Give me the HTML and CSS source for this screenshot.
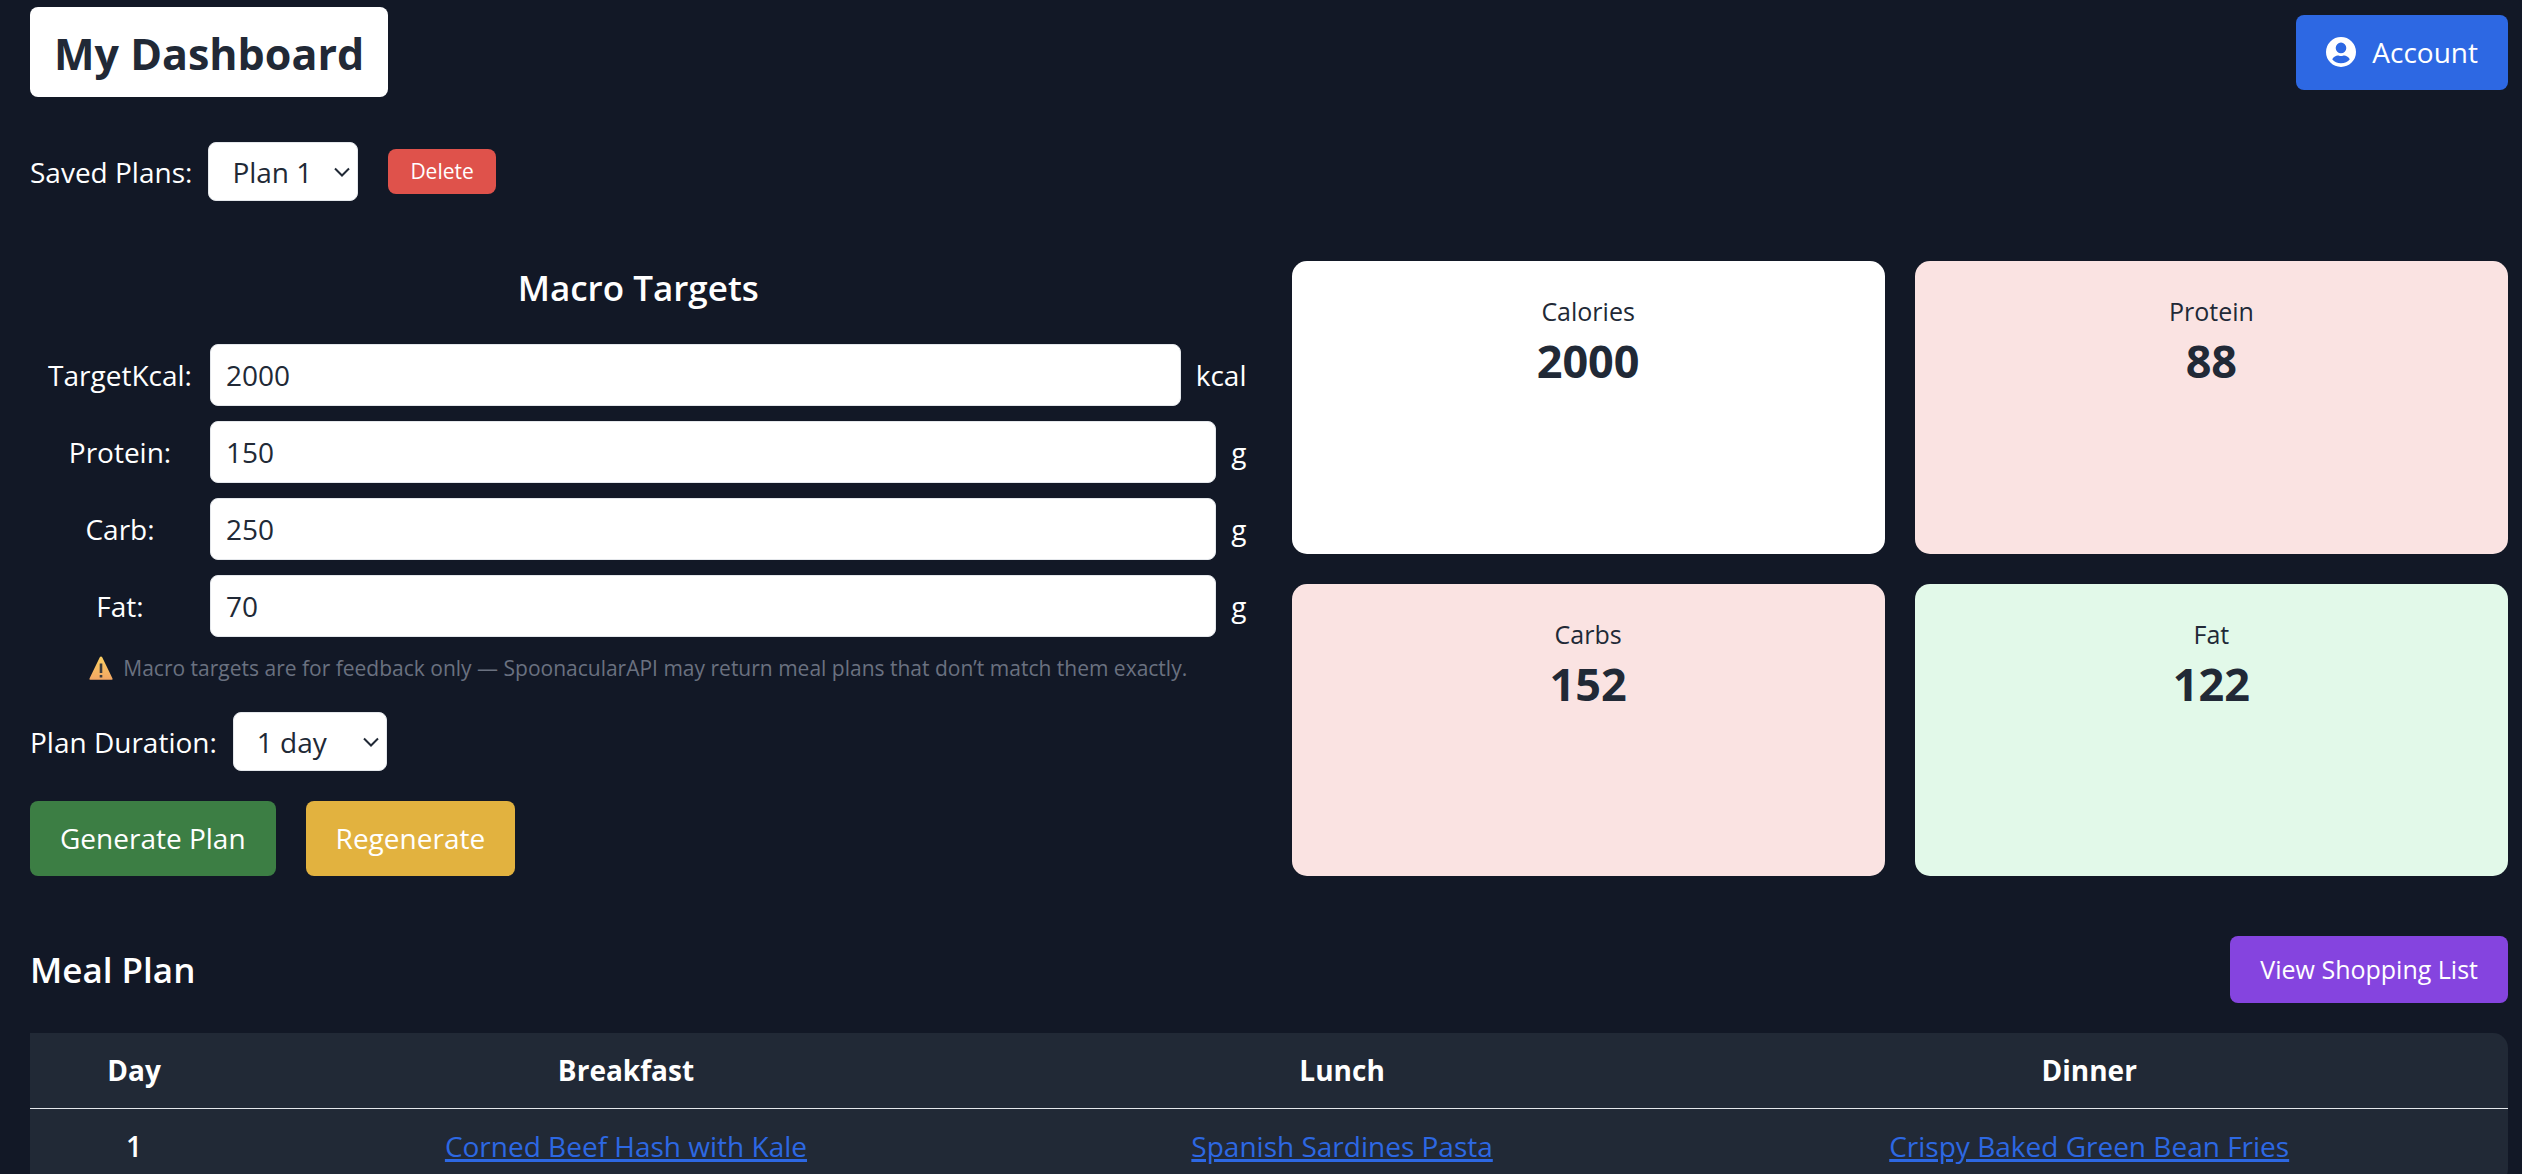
FILE: index.html
```html
<!DOCTYPE html>
<html lang="en">
<head>
  <meta charset="utf-8">
  <title>My Dashboard</title>
  <meta name="viewport" content="width=device-width, initial-scale=1">
  <link rel="stylesheet" href="styles.css">
</head>
<body>
  <main class="page">
    <header class="topbar">
      <h1 class="title">My Dashboard</h1>
      <button class="btn btn-account" type="button">
        <svg class="account-icon" viewBox="0 0 30 30" aria-hidden="true">
          <path fill="#fff" fill-rule="evenodd" d="M15 0a15 15 0 1 1 0 30a15 15 0 0 1 0-30zM15 5.600a5.300 5.300 0 1 0 0 10.600a5.300 5.300 0 0 0 0-10.600zM6.200 22.300C8.200 24.900 11.300 26.300 15 26.300s6.800-1.400 8.800-4c-1.500-2.600-3.800-3.800-5.600-3.800c-.8 0-1.700.6-3.200.6s-2.400-.6-3.200-.6c-1.800 0-4.100 1.200-5.600 3.800z"/>
        </svg>
        Account
      </button>
    </header>

    <div class="saved">
      <label for="saved-plan">Saved Plans:</label>
      <span class="select-wrap">
        <select class="select" id="saved-plan"><option>Plan 1</option><option>Plan 2</option></select>
        <svg class="chevron" viewBox="0 0 16 10" aria-hidden="true"><path d="M1 1.500l7 7l7-7"/></svg>
      </span>
      <button class="btn btn-delete" type="button">Delete</button>
    </div>

    <div class="columns">
      <form class="targets">
        <h2 class="heading heading-center">Macro Targets</h2>
        <div class="fields">
          <div class="field"><label class="field-label" for="kcal">TargetKcal:</label><input class="input" id="kcal" type="text" value="2000"><span>kcal</span></div>
          <div class="field"><label class="field-label" for="protein">Protein:</label><input class="input" id="protein" type="text" value="150"><span>g</span></div>
          <div class="field"><label class="field-label" for="carb">Carb:</label><input class="input" id="carb" type="text" value="250"><span>g</span></div>
          <div class="field"><label class="field-label" for="fat">Fat:</label><input class="input" id="fat" type="text" value="70"><span>g</span></div>
        </div>
        <p class="note">
          <svg class="warn-icon" viewBox="0 0 24 24" aria-hidden="true">
            <defs><linearGradient id="warn" x1="0" y1="0" x2="0" y2="1"><stop offset="0" stop-color="#fbcf62"/><stop offset="1" stop-color="#f2a663"/></linearGradient></defs>
            <path fill="url(#warn)" d="M12 0.500q.8 0 1.200.8L23.500 22.500q.5 1.200-.8 1.200H1.300q-1.300 0-.8-1.200L10.800 1.300q.4-.8 1.200-.8z"/>
            <path fill="#3b3a3c" d="M10.700 7.500h2.600v9.500h-2.600zM10.700 19h2.600v2.500h-2.600z"/>
          </svg>
          Macro targets are for feedback only — SpoonacularAPI may return meal plans that don’t match them exactly.
        </p>
        <div class="duration">
          <label for="duration">Plan Duration:</label>
          <span class="select-wrap">
            <select class="select select-day" id="duration"><option>1 day</option><option>7 days</option></select>
            <svg class="chevron" viewBox="0 0 16 10" aria-hidden="true"><path d="M1 1.500l7 7l7-7"/></svg>
          </span>
        </div>
        <div class="actions">
          <button class="btn btn-generate" type="button">Generate Plan</button>
          <button class="btn btn-regenerate" type="button">Regenerate</button>
        </div>
      </form>

      <section class="cards">
        <div class="card"><div class="card-name">Calories</div><div class="card-value">2000</div></div>
        <div class="card card-off"><div class="card-name">Protein</div><div class="card-value">88</div></div>
        <div class="card card-off"><div class="card-name">Carbs</div><div class="card-value">152</div></div>
        <div class="card card-ok"><div class="card-name">Fat</div><div class="card-value">122</div></div>
      </section>
    </div>

    <div class="plan-head">
      <h2 class="heading">Meal Plan</h2>
      <button class="btn btn-list" type="button">View Shopping List</button>
    </div>

    <table class="plan">
      <colgroup><col class="col-day"><col class="col-breakfast"><col class="col-lunch"><col></colgroup>
      <thead><tr><th>Day</th><th>Breakfast</th><th>Lunch</th><th>Dinner</th></tr></thead>
      <tbody>
        <tr>
          <td class="day">1</td>
          <td><a href="#breakfast">Corned Beef Hash with Kale</a></td>
          <td><a href="#lunch">Spanish Sardines Pasta</a></td>
          <td><a href="#dinner">Crispy Baked Green Bean Fries</a></td>
        </tr>
      </tbody>
    </table>
  </main>
</body>
</html>
```
FILE: styles.css
```css
* {
  box-sizing: border-box;
}

body {
  margin: 0;
  background: #121826;
  color: #fff;
  font: 28px/44px "Open Sans", "Noto Sans", sans-serif;
}

h1,
h2,
p {
  margin: 0;
}

.page {
  padding: 7px 14px 30px 30px;
}

.topbar,
.plan-head {
  display: flex;
  justify-content: space-between;
  align-items: center;
}

.title {
  padding: 20px 24px 16px;
  border-radius: 8px;
  background: #fff;
  color: #212936;
  font-size: 43px;
  line-height: 54px;
  font-weight: 700;
}

.btn {
  border: 0;
  border-radius: 8px;
  padding: 0 30px;
  color: #fff;
  font: inherit;
  line-height: 45px;
}

.btn-account {
  display: flex;
  align-items: center;
  gap: 16px;
  padding: 15px 30px;
  background: #2d68e3;
}

.account-icon {
  width: 30px;
  height: 30px;
}

.saved {
  display: flex;
  align-items: center;
  margin-top: 45px;
}

.select-wrap {
  position: relative;
  display: flex;
  margin-left: 16px;
}

.select {
  appearance: none;
  width: 150px;
  height: 59px;
  padding: 0 23px;
  border: 1px solid #e4e7eb;
  border-radius: 8px;
  background: #fff;
  color: #212936;
  font: inherit;
}

.select-day {
  width: 154px;
}

.chevron {
  position: absolute;
  right: 8px;
  top: 25px;
  width: 16px;
  height: 10px;
  fill: none;
  stroke: #212936;
  stroke-width: 2;
  pointer-events: none;
}

.btn-delete {
  margin-left: 30px;
  padding: 0 22px;
  background: #df524b;
  font-size: 21px;
}

.columns {
  display: grid;
  grid-template-columns: 1fr 1fr;
  gap: 45px;
  margin-top: 60px;
}

.heading {
  font-size: 35px;
  line-height: 54px;
  font-weight: 600;
}

.heading-center {
  text-align: center;
}

.fields {
  display: grid;
  gap: 15px;
  margin-top: 29px;
}

.field {
  display: flex;
  align-items: center;
  gap: 15px;
}

.field-label {
  width: 165px;
  padding-left: 15px;
  text-align: center;
}

.input {
  flex: 1;
  min-width: 0;
  height: 62px;
  padding: 0 15px;
  border: 1px solid #e4e7eb;
  border-radius: 8px;
  color: #212936;
  background: #fff;
  font: inherit;
}

.note {
  display: flex;
  justify-content: center;
  align-items: center;
  gap: 10px;
  margin-top: 16px;
  color: #6a7180;
  font-size: 21px;
  line-height: 30px;
}

.warn-icon {
  width: 24px;
  height: 24px;
}

.duration {
  display: flex;
  align-items: center;
  margin-top: 29px;
}

.actions {
  display: flex;
  gap: 30px;
  margin-top: 30px;
}

.btn-generate {
  padding: 15px 30px;
  background: #3c7e44;
}

.btn-regenerate {
  padding: 15px 30px;
  background: #e2b23f;
}

.cards {
  display: grid;
  grid-template-columns: 1fr 1fr;
  grid-auto-rows: 1fr;
  gap: 30px;
}

.card {
  padding: 30px;
  border-radius: 15px;
  background: #fff;
  color: #212936;
  text-align: center;
}

.card-off {
  background: #fae3e2;
}

.card-ok {
  background: #e2f9e9;
}

.card-name {
  font-size: 25px;
  line-height: 40px;
}

.card-value {
  font-size: 45px;
  line-height: 60px;
  font-weight: 700;
}

.plan-head {
  margin-top: 60px;
}

.btn-list {
  padding: 11px 30px;
  background: #8544df;
  font-size: 25px;
}

.plan {
  width: 100%;
  margin-top: 30px;
  border-collapse: collapse;
  table-layout: fixed;
  border-radius: 0 15px 15px 0;
  background: #212936;
  text-align: center;
}

.plan th,
.plan td {
  height: 76px;
  padding: 0;
}

.plan th {
  height: 75px;
  border-bottom: 1px solid #e4e7eb;
  font-weight: 700;
}

.plan .day {
  font-weight: 600;
}

.plan a {
  color: #2d68e3;
  text-decoration: underline;
  text-decoration-thickness: 3px;
  text-underline-offset: 2px;
}

.col-day {
  width: 8.4%;
}

.col-breakfast {
  width: 31.3%;
}

.col-lunch {
  width: 26.5%;
}
```
